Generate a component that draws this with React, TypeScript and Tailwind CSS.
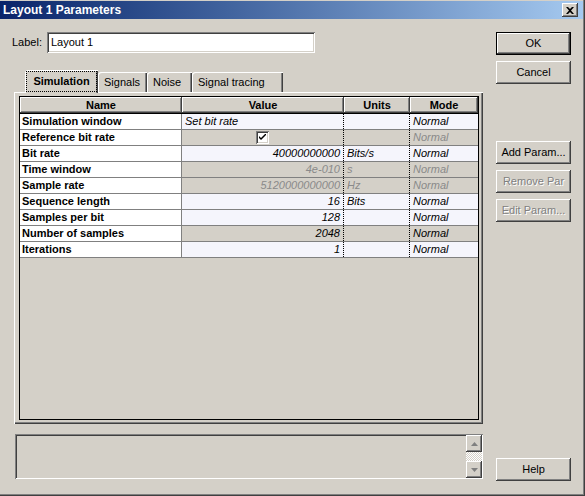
import React from "react";

const raised =
  "shadow-[inset_-1px_-1px_#404040,inset_1px_1px_#ffffff,inset_-2px_-2px_#808080,inset_2px_2px_#d4d0c8]";
const sunken =
  "shadow-[inset_1px_1px_#808080,inset_-1px_-1px_#ffffff,inset_2px_2px_#404040,inset_-2px_-2px_#d4d0c8]";

type Row = {
  name: string;
  value: string;
  align: "left" | "right" | "check";
  units: string;
  light: boolean;
  dim: boolean;
};

const rows: Row[] = [
  { name: "Simulation window", value: "Set bit rate", align: "left", units: "", light: true, dim: false },
  { name: "Reference bit rate", value: "", align: "check", units: "", light: false, dim: true },
  { name: "Bit rate", value: "40000000000", align: "right", units: "Bits/s", light: true, dim: false },
  { name: "Time window", value: "4e-010", align: "right", units: "s", light: false, dim: true },
  { name: "Sample rate", value: "5120000000000", align: "right", units: "Hz", light: false, dim: true },
  { name: "Sequence length", value: "16", align: "right", units: "Bits", light: true, dim: false },
  { name: "Samples per bit", value: "128", align: "right", units: "", light: true, dim: false },
  { name: "Number of samples", value: "2048", align: "right", units: "", light: false, dim: false },
  { name: "Iterations", value: "1", align: "right", units: "", light: true, dim: false },
];

function Button({ label, disabled, isDefault, className = "" }: { label: string; disabled?: boolean; isDefault?: boolean; className?: string }) {
  return (
    <div className={`h-[23px] w-[75px] ${isDefault ? "border border-black" : ""} ${className}`}>
      <div
        className={`flex h-full w-full items-center justify-center bg-[#d4d0c8] ${raised} ${
          disabled ? "text-[#808080] [text-shadow:1px_1px_0_#ffffff]" : "text-black"
        }`}
      >
        {label}
      </div>
    </div>
  );
}

function Tab({ label, selected, w }: { label: string; selected?: boolean; w: string }) {
  if (selected) {
    return (
      <div className={`relative z-10 -mb-[1px] h-[23px] ${w} rounded-tl-[3px] bg-[#d4d0c8] p-[1px] shadow-[inset_1px_1px_#ffffff,inset_-1px_0_#404040,inset_-2px_0_#808080]`}>
        <div className="flex h-full items-center justify-center border border-dotted border-black font-bold">{label}</div>
      </div>
    );
  }
  return (
    <div className={`flex h-[20px] ${w} items-center rounded-tl-[3px] bg-[#d4d0c8] pl-[6px] shadow-[inset_1px_1px_#ffffff,inset_-1px_0_#404040,inset_-2px_0_#808080]`}>
      {label}
    </div>
  );
}

function Check() {
  return (
    <div className="flex h-[13px] w-[13px] items-center justify-center bg-white shadow-[inset_1px_1px_#808080,inset_-1px_-1px_#ffffff,inset_2px_2px_#404040,inset_-2px_-2px_#d4d0c8]">
      <svg width="7" height="7" viewBox="0 0 7 7">
        <path d="M0 2 L0 4 L2 6 L7 1 L7 -1 L2 4 Z" fill="#000" />
      </svg>
    </div>
  );
}

export default function App() {
  return (
    <div className="relative h-[496px] w-[585px] overflow-hidden bg-[#d4d0c8] pt-[1px] font-['Liberation_Sans',Arial,sans-serif] text-[11px] text-black shadow-[inset_-1px_-1px_#404040,inset_-2px_-2px_#808080]">
      {/* title bar */}
      <div className="mr-[2px] flex h-[18px] items-center justify-between bg-linear-to-r from-[#0a246a] to-[#a6caf0] pl-[3px] pr-[5px]">
        <span className="text-[12px] font-bold text-white">Layout 1 Parameters</span>
        <div className={`flex h-[14px] w-[16px] items-center justify-center bg-[#d4d0c8] ${raised}`}>
          <svg width="8" height="7" viewBox="0 0 8 7">
            <path d="M0 0 L2 0 L4 2 L6 0 L8 0 L5 3.5 L8 7 L6 7 L4 5 L2 7 L0 7 L3 3.5 Z" fill="#000" />
          </svg>
        </div>
      </div>

      <div className="flex">
        {/* left side */}
        <div className="w-[483px]">
          <div className="mt-[13px] flex h-[21px] items-center">
            <span className="w-[47px] pl-[12px]">Label:</span>
            <div className={`flex h-[21px] w-[268px] items-center bg-white pl-[4px] ${sunken}`}>Layout 1</div>
          </div>

          <div className="ml-[25px] mt-[17px] flex h-[22px] items-end">
            <Tab label="Simulation" selected w="w-[73px]" />
            <Tab label="Signals" w="w-[49px]" />
            <Tab label="Noise" w="w-[45px]" />
            <Tab label="Signal tracing" w="w-[91px]" />
          </div>

          <div className="ml-[14px] h-[332px] w-[469px] pl-[5px] pt-[4px] shadow-[inset_1px_1px_#ffffff,inset_-1px_-1px_#404040,inset_-2px_-2px_#808080]">
            <div className="h-[324px] w-[460px] border border-black">
              <div className="flex h-[17px] border-b border-black font-bold">
                <div className={`flex w-[162px] items-center justify-center ${raised}`}>Name</div>
                <div className={`flex w-[162px] items-center justify-center ${raised}`}>Value</div>
                <div className={`flex w-[66px] items-center justify-center ${raised}`}>Units</div>
                <div className={`flex flex-1 items-center justify-center ${raised}`}>Mode</div>
              </div>
              {rows.map((r) => {
                const bg = r.light ? "bg-[#f5f5fc]" : "bg-[#d4d0c8]";
                const tc = r.dim ? "text-[#8a8a8a]" : "text-black";
                return (
                  <div key={r.name} className="flex h-[16px] border-b border-[#808080] leading-[15px]">
                    <div className="w-[162px] border-r border-[#808080] bg-white pl-[2px] font-bold">{r.name}</div>
                    <div
                      className={`flex w-[162px] items-center border-r border-dotted border-black italic ${bg} ${tc} ${
                        r.align === "left" ? "pl-[3px]" : r.align === "check" ? "justify-center" : "justify-end pr-[3px]"
                      }`}
                    >
                      {r.align === "check" ? <Check /> : r.value}
                    </div>
                    <div className={`w-[66px] border-r border-dotted border-black pl-[3px] italic ${bg} ${tc}`}>{r.units}</div>
                    <div className={`flex-1 pl-[3px] italic ${bg} ${tc}`}>Normal</div>
                  </div>
                );
              })}
            </div>
          </div>

          {/* message area */}
          <div className={`ml-[15px] mt-[10px] flex h-[45px] w-[468px] justify-end bg-[#d4d0c8] py-[1px] pr-[1px] ${sunken}`}>
            <div className="flex w-[16px] flex-col">
              <div className={`flex h-[17px] items-center justify-center ${raised}`}>
                <svg width="7" height="4" viewBox="0 0 7 4">
                  <path d="M3.5 0 L7 4 L0 4 Z" fill="#808080" />
                </svg>
              </div>
              <div className="flex-1 bg-[repeating-conic-gradient(#ffffff_0_25%,#d4d0c8_0_50%)] bg-[length:2px_2px]" />
              <div className={`flex h-[17px] items-center justify-center ${raised}`}>
                <svg width="7" height="4" viewBox="0 0 7 4">
                  <path d="M0 0 L7 0 L3.5 4 Z" fill="#808080" />
                </svg>
              </div>
            </div>
          </div>
        </div>

        {/* right buttons */}
        <div className="ml-[13px] flex w-[75px] flex-col">
          <Button label="OK" isDefault className="mt-[13px]" />
          <Button label="Cancel" className="mt-[6px]" />
          <Button label="Add Param..." className="mt-[57px]" />
          <Button label="Remove Par" disabled className="mt-[6px]" />
          <Button label="Edit Param..." disabled className="mt-[6px]" />
          <Button label="Help" className="mt-[236px]" />
        </div>
      </div>
    </div>
  );
}
